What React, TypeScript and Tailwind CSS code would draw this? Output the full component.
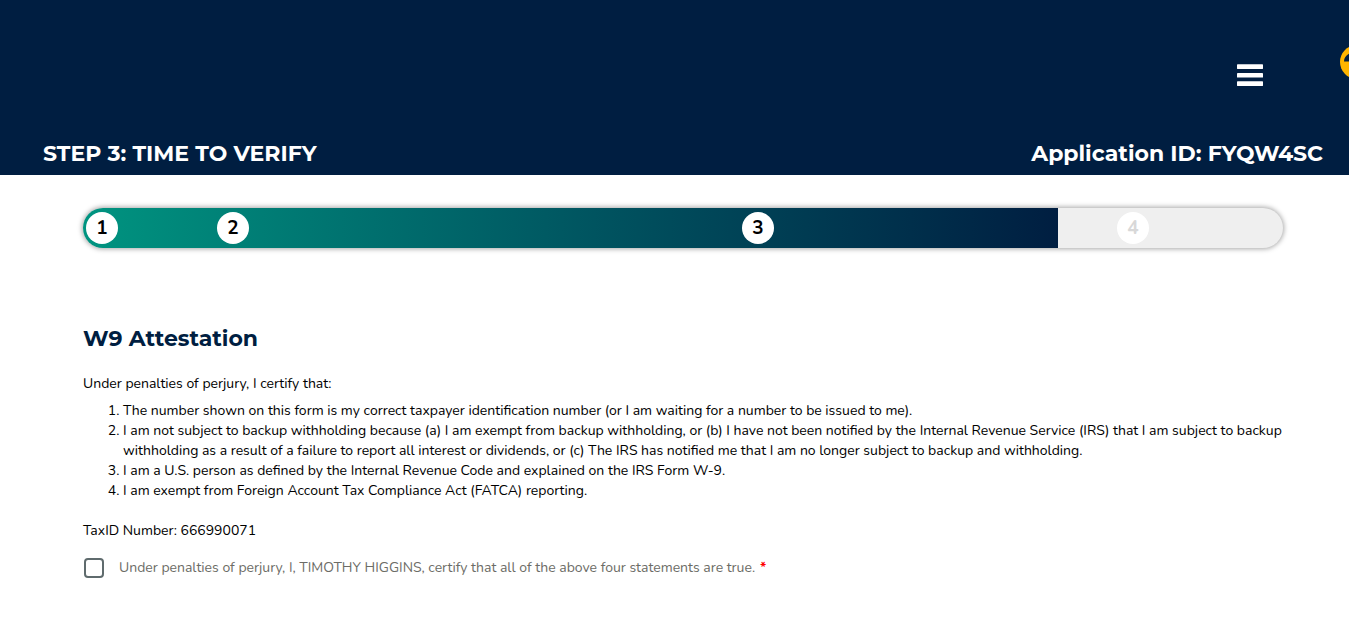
const heading = "font-['Montserrat','Open_Sans',sans-serif] text-[22px] leading-7 font-bold";
const circle = "flex size-8 items-center justify-center rounded-full bg-white text-[19px] font-bold";

const statements = [
  "The number shown on this form is my correct taxpayer identification number (or I am waiting for a number to be issued to me).",
  "I am not subject to backup withholding because (a) I am exempt from backup withholding, or (b) I have not been notified by the Internal Revenue Service (IRS) that I am subject to backup withholding as a result of a failure to report all interest or dividends, or (c) The IRS has notified me that I am no longer subject to backup and withholding.",
  "I am a U.S. person as defined by the Internal Revenue Code and explained on the IRS Form W-9.",
  "I am exempt from Foreign Account Tax Compliance Act (FATCA) reporting.",
];

function Header() {
  return (
    <header className="relative overflow-hidden bg-[#001e41] text-white">
      <div className="flex justify-end pt-[60px] pr-[86px]">
        <button type="button" aria-label="Menu" className="block py-1">
          <svg width="26" height="22" viewBox="0 0 26 22" fill="currentColor" aria-hidden="true">
            <rect y="0.3" width="26" height="4.6" rx="0.4" />
            <rect y="9" width="26" height="4.6" rx="0.4" />
            <rect y="17.3" width="26" height="4.6" rx="0.4" />
          </svg>
        </button>
      </div>
      <a href="#help" aria-label="Help" className="absolute top-[45px] -right-[25px]">
        <svg width="34" height="34" viewBox="0 0 34 34" aria-hidden="true">
          <circle cx="17" cy="17" r="17" fill="#ffb500" />
          <path d="M4 16.6c0-4 2-6.6 5.5-8.2H12v8.2z" fill="#001e41" />
        </svg>
      </a>
      <div className="flex items-center justify-between pt-[50px] pr-[26px] pb-[7px] pl-[43px]">
        <h1 className={heading}>STEP 3: TIME TO VERIFY</h1>
        <p className={heading}>Application ID: FYQW4SC</p>
      </div>
    </header>
  );
}

function Progress() {
  return (
    <ol className="flex h-10 overflow-hidden rounded-full bg-[#efefef] shadow-[0_0_5px_1px_rgba(0,0,0,0.35)]">
      <li className="w-[81.25%] bg-linear-to-r from-[#009480] to-[#001e41]">
        <ol className="grid h-full grid-cols-13 items-center">
          <li className="pl-[3px]"><span className={circle}>1</span></li>
          <li className="col-span-2 flex justify-center"><span className={circle}>2</span></li>
          <li className="col-span-8 col-start-6 flex justify-center" aria-current="step"><span className={circle}>3</span></li>
        </ol>
      </li>
      <li className="grid flex-1 grid-cols-3 items-center">
        <div className="col-span-2 flex justify-center text-[#d8d8d8]"><span className={circle}>4</span></div>
      </li>
    </ol>
  );
}

export default function App() {
  return (
    <div className="min-h-screen bg-white pr-[17px] font-['Nunito','Open_Sans',sans-serif] text-sm leading-5 text-black">
      <Header />
      <main className="pt-[33px] pr-[66px] pb-16 pl-[83px]">
        <Progress />
        <h2 className={heading + " mt-[77px] text-[#001e41]"}>W9 Attestation</h2>
        <p className="mt-[21px]">Under penalties of perjury, I certify that:</p>
        <ol className="mt-[7px] list-decimal pl-10">
          {statements.map((text) => (
            <li key={text}>{text}</li>
          ))}
        </ol>
        <p className="mt-5">TaxID Number: 666990071</p>
        <label className="mt-[17px] flex items-center pl-px text-[#6c6c66]">
          <input type="checkbox" required className="mr-[15px] size-5 appearance-none rounded border-2 border-[#5f6b6d] checked:bg-[#5f6b6d]" />
          <span>Under penalties of perjury, I, TIMOTHY HIGGINS, certify that all of the above four statements are true.</span>
          <span className="ml-[5px] font-bold text-[#f00]">*</span>
        </label>
      </main>
    </div>
  );
}
